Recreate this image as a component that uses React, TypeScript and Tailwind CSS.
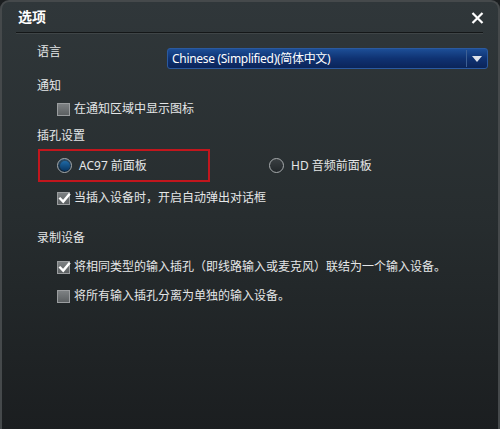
import React from "react";

const font = { fontFamily: '"Noto Sans", "Noto Sans CJK SC", sans-serif' };

function CheckBox({ checked }: { checked: boolean }) {
  return (
    <span className="relative inline-block w-[13px] h-[13px] shrink-0 border border-[#9a9d9f] bg-gradient-to-b from-[#7d8183] to-[#5c6062]">
      {checked && (
        <svg className="absolute left-[0px] top-[-1px]" width="13" height="13" viewBox="0 0 13 13">
          <path d="M2.2 6.6 L5.2 9.6 L11 2.6" fill="none" stroke="#ffffff" strokeWidth="2.4" strokeLinecap="square" />
        </svg>
      )}
    </span>
  );
}

function Radio({ selected }: { selected: boolean }) {
  return (
    <span
      className={
        "inline-flex items-center justify-center w-[15px] h-[15px] shrink-0 rounded-full border border-[#a7abad] " +
        (selected
          ? "bg-gradient-to-b from-[#2d4f6b] to-[#0d2236]"
          : "bg-gradient-to-b from-[#3a3f42] to-[#22272a]")
      }
    >
      {selected && <span className="w-[10px] h-[10px] rounded-full bg-gradient-to-b from-[#1f6aa6] to-[#083562]" />}
    </span>
  );
}

function CheckRow({ checked, label, className }: { checked: boolean; label: string; className: string }) {
  return (
    <div className={"flex items-center h-[16px] ml-[20px] gap-[4px] " + className}>
      <CheckBox checked={checked} />
      <span className="text-[12px] leading-[16px] text-[#e4e6e7]">{label}</span>
    </div>
  );
}

export default function App() {
  return (
    <div className="w-[500px] h-[429px] bg-[#1b1e20]" style={font}>
      <div className="w-[500px] h-[429px] rounded-t-[9px] border-[2px] border-b-0 border-[#45494b] bg-gradient-to-b from-[#30373a] via-[#272d2f] to-[#1b1e20] flex flex-col">
        <div className="h-[30px] flex items-center justify-between pl-[16px] pr-[14px]">
          <span className="text-[14px] font-bold text-white leading-[16px] mt-[-1px]">选项</span>
          <svg width="13" height="12" viewBox="0 0 13 12" className="mt-[2px]">
            <path d="M1.5 1 L11.5 11 M11.5 1 L1.5 11" stroke="#ffffff" strokeWidth="2.2" />
          </svg>
        </div>
        <div className="ml-[14px] mr-[15px] h-[2px] border-t border-[#141718] border-b border-b-[#3f4547]" />
        <div className="pl-[35px] flex flex-col">
          <div className="flex items-start mt-[10px]">
            <span className="w-[130px] text-[12px] leading-[16px] text-[#e4e6e7]">语言</span>
            <div className="mt-[4px] w-[321px] h-[21px] rounded-[3px] border border-[#2b5aa0] bg-gradient-to-b from-[#1d4e96] via-[#0f3272] to-[#0b2459] flex items-center">
              <span className="flex-1 pl-[4px] text-[12px] leading-[16px] text-white tracking-[-0.3px]">Chinese (Simplified)(简体中文)</span>
              <span className="w-[1px] h-[17px] bg-[#3d5f93]" />
              <span className="w-[20px] flex justify-center">
                <svg width="10" height="6" viewBox="0 0 10 6">
                  <path d="M0 0 L10 0 L5 6 Z" fill="#dfe3ea" />
                </svg>
              </span>
            </div>
          </div>
          <span className="mt-[9px] text-[12px] leading-[16px] text-[#e4e6e7]">通知</span>
          <CheckRow className="mt-[7px]" checked={false} label="在通知区域中显示图标" />
          <span className="mt-[11px] text-[12px] leading-[16px] text-[#e4e6e7]">插孔设置</span>
          <div className="flex items-center mt-[5px]">
            <div className="ml-[1px] w-[172px] h-[33px] border-[2px] border-[#c2161d] flex items-center pl-[17px] gap-[7px]">
              <Radio selected={true} />
              <span className="text-[12px] leading-[16px] text-[#e4e6e7]">AC97 前面板</span>
            </div>
            <div className="ml-[59px] flex items-center gap-[7px]">
              <Radio selected={false} />
              <span className="text-[12px] leading-[16px] text-[#e4e6e7]">HD 音频前面板</span>
            </div>
          </div>
          <CheckRow className="mt-[8px]" checked={true} label="当插入设备时，开启自动弹出对话框" />
          <span className="mt-[24px] text-[12px] leading-[16px] text-[#e4e6e7]">录制设备</span>
          <CheckRow className="mt-[13px]" checked={true} label="将相同类型的输入插孔（即线路输入或麦克风）联结为一个输入设备。" />
          <CheckRow className="mt-[13px]" checked={false} label="将所有输入插孔分离为单独的输入设备。" />
        </div>
      </div>
    </div>
  );
}
